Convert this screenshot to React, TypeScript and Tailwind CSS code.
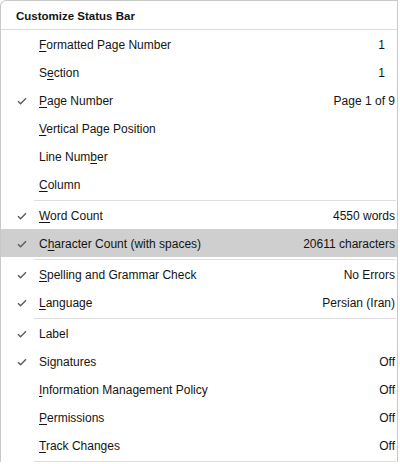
import type { ReactNode } from 'react';

type Item = {
  label: ReactNode;
  value?: string;
  checked?: boolean;
  active?: boolean;
  valueClass?: string;
};

const u = (s: string) => <span className="underline underline-offset-2">{s}</span>;

const GROUPS: Item[][] = [
  [
    { label: <>{u('F')}ormatted Page Number</>, value: '1', valueClass: 'pr-[10px]' },
    { label: <>S{u('e')}ction</>, value: '1', valueClass: 'pr-[10px]' },
    { label: <>{u('P')}age Number</>, value: 'Page 1 of 9', checked: true },
    { label: <>{u('V')}ertical Page Position</> },
    { label: <>Line Num{u('b')}er</> },
    { label: <>{u('C')}olumn</> },
  ],
  [
    { label: <>{u('W')}ord Count</>, value: '4550 words', checked: true },
    { label: <>C{u('h')}aracter Count (with spaces)</>, value: '20611 characters', checked: true, active: true },
  ],
  [
    { label: <>{u('S')}pelling and Grammar Check</>, value: 'No Errors', checked: true },
    { label: <>{u('L')}anguage</>, value: 'Persian (Iran)', checked: true },
  ],
  [
    { label: <>Label</>, checked: true },
    { label: <>Signatures</>, value: 'Off', checked: true },
    { label: <>{u('I')}nformation Management Policy</>, value: 'Off' },
    { label: <>{u('P')}ermissions</>, value: 'Off' },
    { label: <>{u('T')}rack Changes</>, value: 'Off' },
  ],
];

function Check() {
  return (
    <svg width="10" height="8" viewBox="0 0 10 8" fill="none" className="text-[#5c5c5c]">
      <path d="M1 4.2 L3.6 6.8 L9 1.2" stroke="currentColor" strokeWidth="1.4" />
    </svg>
  );
}

function Separator() {
  return (
    <div className="h-[3px] flex items-end pl-[33px] pr-[1px]">
      <div className="h-px flex-1 bg-[#dedede]" />
    </div>
  );
}

function Row({ item }: { item: Item }) {
  return (
    <div className={`flex items-center h-[28px] pr-[2px] pt-px ${item.active ? 'bg-[#cfcfcf]' : ''}`}>
      <div className="w-[38px] flex items-center justify-center pl-[4px]">{item.checked && <Check />}</div>
      <div className="flex-1 truncate">{item.label}</div>
      {item.value && <div className={`whitespace-nowrap ${item.valueClass ?? ''}`}>{item.value}</div>}
    </div>
  );
}

export default function App() {
  return (
    <div className="w-[400px] h-[464px] overflow-hidden bg-white">
      <div
        className="w-[398px] border-l border-t border-r border-[#c9c9c9] rounded-tl-[6px] bg-white text-[#141414] text-[12px]"
        style={{ fontFamily: '"Liberation Sans", Arial, sans-serif' }}
      >
        <div className="h-[28px] flex items-center pl-[15px] pt-[3px] font-bold text-[11.5px]">Customize Status Bar</div>
        <div className="h-px bg-[#dcdcdc]" />
        {GROUPS.map((g, i) => (
          <div key={i}>
            {i > 0 && <Separator />}
            {g.map((item, j) => (
              <Row key={j} item={item} />
            ))}
          </div>
        ))}
        <Separator />
      </div>
    </div>
  );
}
